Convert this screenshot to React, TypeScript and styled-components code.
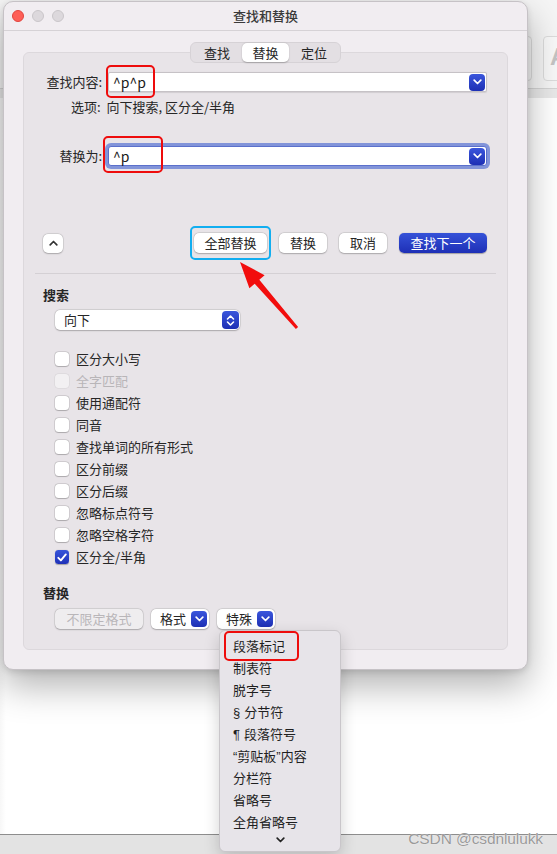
import React from "react";
import styled, { createGlobalStyle } from "styled-components";

const FONT = `"Noto Sans CJK SC", "Noto Sans", sans-serif`;

const Global = createGlobalStyle`
  html, body { margin: 0; padding: 0; background: #fff; }
  body { font-family: ${FONT}; font-size: 13px; color: #262626; }
  * { box-sizing: border-box; }
`;

const Desktop = styled.div`
  position: relative;
  width: 557px;
  height: 854px;
  overflow: hidden;
  background: #fff;
  display: flex;
  flex-direction: column;
`;

const BackToolbar = styled.div`
  height: 89px;
  background: #f5f5f5;
  border-bottom: 1px solid #d4d4d4;
  display: flex;
  gap: 11px;
  padding: 36px 0 0 480px;
`;

const BackTool = styled.div`
  width: 52px;
  height: 45px;
  flex: none;
  border: 1px solid #dcdcdc;
  border-radius: 4px;
  background: #f8f8f8;
  font: bold 24px/40px "Liberation Sans", sans-serif;
  color: #c4c4c4;
  padding-left: 6px;
`;

const BackBand = styled.div`
  height: 9px;
  background: #e9e9e9;
`;

const BackContent = styled.div`
  flex: 1;
  background: linear-gradient(90deg, #f7f7f7 0, #fff 6px);
`;

const BottomBar = styled.div`
  height: 20px;
  border-top: 1px solid #8d8d8d;
  background: #e3e3e3;
`;

const Watermark = styled.div`
  position: absolute;
  right: 14px;
  bottom: 7px;
  font: 15.5px/16px "Liberation Sans", sans-serif;
  color: #9a9a9a;
  text-shadow: 0 0 1px #fff;
  letter-spacing: -0.1px;
`;

const Window = styled.div`
  position: absolute;
  left: 3px;
  top: 1px;
  width: 525px;
  height: 669px;
  background: #f1edf1;
  border: 1px solid #c6c2c6;
  border-radius: 10px;
  box-shadow: 0 16px 36px rgba(0, 0, 0, 0.3), 0 2px 6px rgba(0, 0, 0, 0.12);
  display: flex;
  flex-direction: column;
  overflow: hidden;
`;

const TitleBar = styled.div`
  height: 29px;
  border-bottom: 1px solid #d6d2d6;
  display: flex;
  align-items: center;
  position: relative;
  padding-left: 8px;
  gap: 8px;
`;

const Light = styled.span<{ $red?: boolean }>`
  width: 12px;
  height: 12px;
  border-radius: 50%;
  background: ${(p) => (p.$red ? "#fe5f57" : "#dcd8dc")};
  border: 0.5px solid ${(p) => (p.$red ? "#e0443e" : "#c9c5c9")};
`;

const Title = styled.div`
  position: absolute;
  left: 0;
  right: 0;
  text-align: center;
  font: 500 13px/16px ${FONT};
  color: #3a3a3a;
`;

const Body = styled.div`
  flex: 1;
  padding-top: 11px;
  display: flex;
  flex-direction: column;
`;

const Tabs = styled.div`
  align-self: center;
  height: 21px;
  display: flex;
  align-items: center;
  padding: 0 1px;
  background: #e3dfe3;
  border: 1px solid #d6d2d6;
  border-radius: 6px;
  position: relative;
  z-index: 1;
`;

const Tab = styled.div<{ $active?: boolean }>`
  height: 19px;
  width: ${(p) => (p.$active ? 47 : 50)}px;
  text-align: center;
  font: 13px/19px ${FONT};
  color: #262626;
  border-radius: 5px;
  background: ${(p) => (p.$active ? "#fff" : "transparent")};
  box-shadow: ${(p) => (p.$active ? "0 0.5px 1.5px rgba(0,0,0,0.25)" : "none")};
`;

const Group = styled.div`
  margin: -11px 0 0 19px;
  width: 485px;
  height: 598px;
  background: #e8e4e8;
  border: 1px solid #dcd8dc;
  border-radius: 6px;
  padding-top: 19px;
  display: flex;
  flex-direction: column;
`;

const FieldRow = styled.div<{ $top?: number }>`
  display: grid;
  grid-template-columns: 78px 1fr;
  column-gap: 6px;
  align-items: center;
  padding-right: 20px;
  margin-top: ${(p) => p.$top ?? 0}px;
`;

const Label = styled.div`
  text-align: right;
  font: 13px/20px ${FONT};
  color: #262626;
`;

const Field = styled.div<{ $focused?: boolean }>`
  height: 20px;
  background: #fff;
  border: 1px solid ${(p) => (p.$focused ? "#5b70cc" : "#c6c2c6")};
  box-shadow: ${(p) =>
    p.$focused
      ? "0 0 0 3px rgba(112,134,214,0.85)"
      : "0 0.5px 1px rgba(0,0,0,0.1)"};
  border-radius: ${(p) => (p.$focused ? 3 : 2)}px;
  display: flex;
  align-items: center;
  padding: 0 1px 0 4px;
`;

const FieldText = styled.span`
  flex: 1;
  font: 14px/18px ${FONT};
  color: #1a1a1a;
`;

const BlueSquare = styled.span<{ $w?: number; $h?: number }>`
  width: ${(p) => p.$w ?? 16}px;
  height: ${(p) => p.$h ?? 16}px;
  flex: none;
  border-radius: 4px;
  background: linear-gradient(#3a56dc, #1d2fb4);
  display: flex;
  align-items: center;
  justify-content: center;
`;

const Options = styled.div`
  margin-top: 7px;
  padding-left: 47px;
  font: 13px/16px ${FONT};
  color: #262626;
`;

const ButtonRow = styled.div<{ $top: number }>`
  display: flex;
  align-items: center;
  margin-top: ${(p) => p.$top}px;
  padding: 0 20px 0 19px;
  gap: 12px;
`;

const Spacer = styled.div`
  flex: 1;
`;

const Button = styled.div<{ $w: number; $primary?: boolean; $disabled?: boolean }>`
  width: ${(p) => p.$w}px;
  height: 20px;
  flex: none;
  border-radius: 5px;
  font: 13px/20px ${FONT};
  text-align: center;
  color: ${(p) => (p.$primary ? "#fff" : p.$disabled ? "#b9b6b9" : "#262626")};
  background: ${(p) =>
    p.$primary
      ? "linear-gradient(#3552d8, #1e2fb6)"
      : p.$disabled
      ? "#efedef"
      : "#fff"};
  box-shadow: ${(p) =>
    p.$primary
      ? "0 0.5px 1px rgba(0,0,0,0.3)"
      : "0 0 0 0.5px rgba(0,0,0,0.12), 0 0.5px 1.5px rgba(0,0,0,0.22)"};
`;

const SplitButton = styled.div<{ $w: number }>`
  width: ${(p) => p.$w}px;
  height: 20px;
  flex: none;
  border-radius: 5px;
  background: #fff;
  box-shadow: 0 0 0 0.5px rgba(0,0,0,0.12), 0 0.5px 1.5px rgba(0,0,0,0.22);
  display: flex;
  align-items: center;
  padding: 0 2px 0 9px;
  font: 13px/20px ${FONT};
  color: #262626;
`;

const SplitText = styled.span`
  flex: 1;
`;

const IconButton = styled.div`
  width: 20px;
  height: 19px;
  flex: none;
  border-radius: 5px;
  background: #fff;
  box-shadow: 0 0 0 0.5px rgba(0,0,0,0.12), 0 0.5px 1.5px rgba(0,0,0,0.22);
  display: flex;
  align-items: center;
  justify-content: center;
`;

const Separator = styled.div`
  margin: 20px 11px 0;
  height: 1px;
  background: #d4d0d4;
`;

const Heading = styled.div<{ $top: number }>`
  margin-top: ${(p) => p.$top}px;
  padding-left: 19px;
  font: 600 13px/16px ${FONT};
  color: #262626;
`;

const Select = styled.div`
  margin: 7px 0 0 31px;
  width: 185px;
  height: 20px;
  border-radius: 5px;
  background: #fff;
  box-shadow: 0 0 0 0.5px rgba(0,0,0,0.12), 0 0.5px 1.5px rgba(0,0,0,0.22);
  display: flex;
  align-items: center;
  padding: 0 1px 0 9px;
  font: 13px/20px ${FONT};
`;

const CheckList = styled.div`
  margin-top: 18px;
  padding-left: 31px;
  display: flex;
  flex-direction: column;
`;

const CheckRow = styled.div<{ $disabled?: boolean }>`
  height: 22px;
  display: flex;
  align-items: center;
  gap: 7px;
  font: 13px/16px ${FONT};
  color: ${(p) => (p.$disabled ? "#b8b5b8" : "#262626")};
`;

const Box = styled.span<{ $checked?: boolean; $disabled?: boolean }>`
  width: 14px;
  height: 14px;
  border-radius: 3.5px;
  flex: none;
  background: ${(p) =>
    p.$checked
      ? "linear-gradient(#3655da, #1f31b8)"
      : p.$disabled
      ? "#f2f0f2"
      : "#fff"};
  box-shadow: ${(p) =>
    p.$checked
      ? "0 0.5px 1px rgba(0,0,0,0.3)"
      : p.$disabled
      ? "0 0 0 0.5px rgba(0,0,0,0.08)"
      : "0 0 0 0.5px rgba(0,0,0,0.18), 0 0.5px 1px rgba(0,0,0,0.18)"};
  display: flex;
  align-items: center;
  justify-content: center;
`;

const FormatRow = styled.div`
  display: flex;
  align-items: center;
  gap: 8px;
  margin-top: 8px;
  padding-left: 31px;
`;

const Menu = styled.div`
  position: absolute;
  left: 219px;
  top: 630px;
  width: 122px;
  height: 222px;
  background: #e7e4e9;
  border: 1px solid #c9c6ca;
  border-radius: 6px;
  box-shadow: 0 6px 16px rgba(0,0,0,0.18);
  padding-top: 4px;
  display: flex;
  flex-direction: column;
`;

const MenuItem = styled.div`
  height: 22px;
  padding-left: 13px;
  font: 13px/22px ${FONT};
  color: #1f1f1f;
  white-space: nowrap;
`;

const Latin = styled.span<{ $gap?: number }>`
  font-family: "Liberation Sans", sans-serif;
  margin-right: ${(p) => p.$gap ?? 0}px;
`;

const MenuMore = styled.div`
  height: 14px;
  display: flex;
  justify-content: center;
  align-items: center;
`;

const Mark = styled.div<{ $x: number; $y: number; $w: number; $h: number; $blue?: boolean }>`
  position: absolute;
  left: ${(p) => p.$x}px;
  top: ${(p) => p.$y}px;
  width: ${(p) => p.$w}px;
  height: ${(p) => p.$h}px;
  border: ${(p) => (p.$blue ? "2.5px solid #12aef0" : "2.5px solid #ee0c0c")};
  border-radius: 5px;
  pointer-events: none;
`;

const Overlay = styled.svg`
  position: absolute;
  left: 0;
  top: 0;
  pointer-events: none;
`;

const ChevronDown = ({ color = "#fff" }: { color?: string }) => (
  <svg width="9" height="6" viewBox="0 0 9 6">
    <path d="M1.2 1.2 L4.5 4.5 L7.8 1.2" fill="none" stroke={color} strokeWidth="1.7" strokeLinecap="round" strokeLinejoin="round" />
  </svg>
);

const ChevronUp = () => (
  <svg width="9" height="6" viewBox="0 0 9 6">
    <path d="M1.2 4.8 L4.5 1.5 L7.8 4.8" fill="none" stroke="#333" strokeWidth="1.7" strokeLinecap="round" strokeLinejoin="round" />
  </svg>
);

const Stepper = () => (
  <svg width="9" height="13" viewBox="0 0 9 13">
    <path d="M1.5 5 L4.5 2 L7.5 5 M1.5 8 L4.5 11 L7.5 8" fill="none" stroke="#fff" strokeWidth="1.6" strokeLinecap="round" strokeLinejoin="round" />
  </svg>
);

const Check = () => (
  <svg width="10" height="9" viewBox="0 0 10 9">
    <path d="M1.3 4.8 L3.9 7.4 L8.8 1.4" fill="none" stroke="#fff" strokeWidth="1.9" strokeLinecap="round" strokeLinejoin="round" />
  </svg>
);

const checks: { label: string; checked?: boolean; disabled?: boolean }[] = [
  { label: "区分大小写" },
  { label: "全字匹配", disabled: true },
  { label: "使用通配符" },
  { label: "同音" },
  { label: "查找单词的所有形式" },
  { label: "区分前缀" },
  { label: "区分后缀" },
  { label: "忽略标点符号" },
  { label: "忽略空格字符" },
  { label: "区分全/半角", checked: true },
];

export default function App() {
  return (
    <>
      <Global />
      <Desktop>
        <BackToolbar>
          <BackTool />
          <BackTool>A</BackTool>
        </BackToolbar>
        <BackBand />
        <BackContent />
        <BottomBar />

        <Window>
          <TitleBar>
            <Light $red />
            <Light />
            <Light />
            <Title>查找和替换</Title>
          </TitleBar>
          <Body>
            <Tabs>
              <Tab>查找</Tab>
              <Tab $active>替换</Tab>
              <Tab>定位</Tab>
            </Tabs>
            <Group>
              <FieldRow>
                <Label>查找内容:</Label>
                <Field>
                  <FieldText>^p^p</FieldText>
                  <BlueSquare $h={17}>
                    <ChevronDown />
                  </BlueSquare>
                </Field>
              </FieldRow>
              <Options>选项:&nbsp;&nbsp;向下搜索, 区分全/半角</Options>
              <FieldRow $top={31}>
                <Label>替换为:</Label>
                <Field $focused>
                  <FieldText>^p</FieldText>
                  <BlueSquare $h={17}>
                    <ChevronDown />
                  </BlueSquare>
                </Field>
              </FieldRow>
              <ButtonRow $top={67}>
                <IconButton>
                  <ChevronUp />
                </IconButton>
                <Spacer />
                <Button $w={73}>全部替换</Button>
                <Button $w={48}>替换</Button>
                <Button $w={48}>取消</Button>
                <Button $w={88} $primary>
                  查找下一个
                </Button>
              </ButtonRow>
              <Separator />
              <Heading $top={13}>搜索</Heading>
              <Select>
                <SplitText>向下</SplitText>
                <BlueSquare $w={17} $h={18}>
                  <Stepper />
                </BlueSquare>
              </Select>
              <CheckList>
                {checks.map((c) => (
                  <CheckRow key={c.label} $disabled={c.disabled}>
                    <Box $checked={c.checked} $disabled={c.disabled}>
                      {c.checked && <Check />}
                    </Box>
                    {c.label}
                  </CheckRow>
                ))}
              </CheckList>
              <Heading $top={17}>替换</Heading>
              <FormatRow>
                <Button $w={88} $disabled>
                  不限定格式
                </Button>
                <SplitButton $w={58}>
                  <SplitText>格式</SplitText>
                  <BlueSquare>
                    <ChevronDown />
                  </BlueSquare>
                </SplitButton>
                <SplitButton $w={58}>
                  <SplitText>特殊</SplitText>
                  <BlueSquare>
                    <ChevronDown />
                  </BlueSquare>
                </SplitButton>
              </FormatRow>
            </Group>
          </Body>
        </Window>

        <Menu>
          <MenuItem>段落标记</MenuItem>
          <MenuItem>制表符</MenuItem>
          <MenuItem>脱字号</MenuItem>
          <MenuItem>
            <Latin $gap={4}>§</Latin>分节符
          </MenuItem>
          <MenuItem>
            <Latin $gap={4}>¶</Latin>段落符号
          </MenuItem>
          <MenuItem>
            <Latin>“</Latin>剪贴板<Latin>”</Latin>内容
          </MenuItem>
          <MenuItem>分栏符</MenuItem>
          <MenuItem>省略号</MenuItem>
          <MenuItem>全角省略号</MenuItem>
          <MenuMore>
            <ChevronDown color="#222" />
          </MenuMore>
        </Menu>

        <Mark $x={106} $y={65} $w={49} $h={33} />
        <Mark $x={103} $y={136} $w={60} $h={37} />
        <Mark $x={224} $y={631} $w={75} $h={30} />
        <Mark $x={190} $y={226} $w={81} $h={34} $blue />

        <Overlay width="557" height="854" viewBox="0 0 557 854">
          <polygon
            points="240,262 249.4,288.2 254.7,283.7 295.9,329 298.1,327 259.3,279.7 264.6,275.2"
            fill="#f20d0d"
          />
        </Overlay>

        <Watermark>CSDN @csdnlulukk</Watermark>
      </Desktop>
    </>
  );
}
